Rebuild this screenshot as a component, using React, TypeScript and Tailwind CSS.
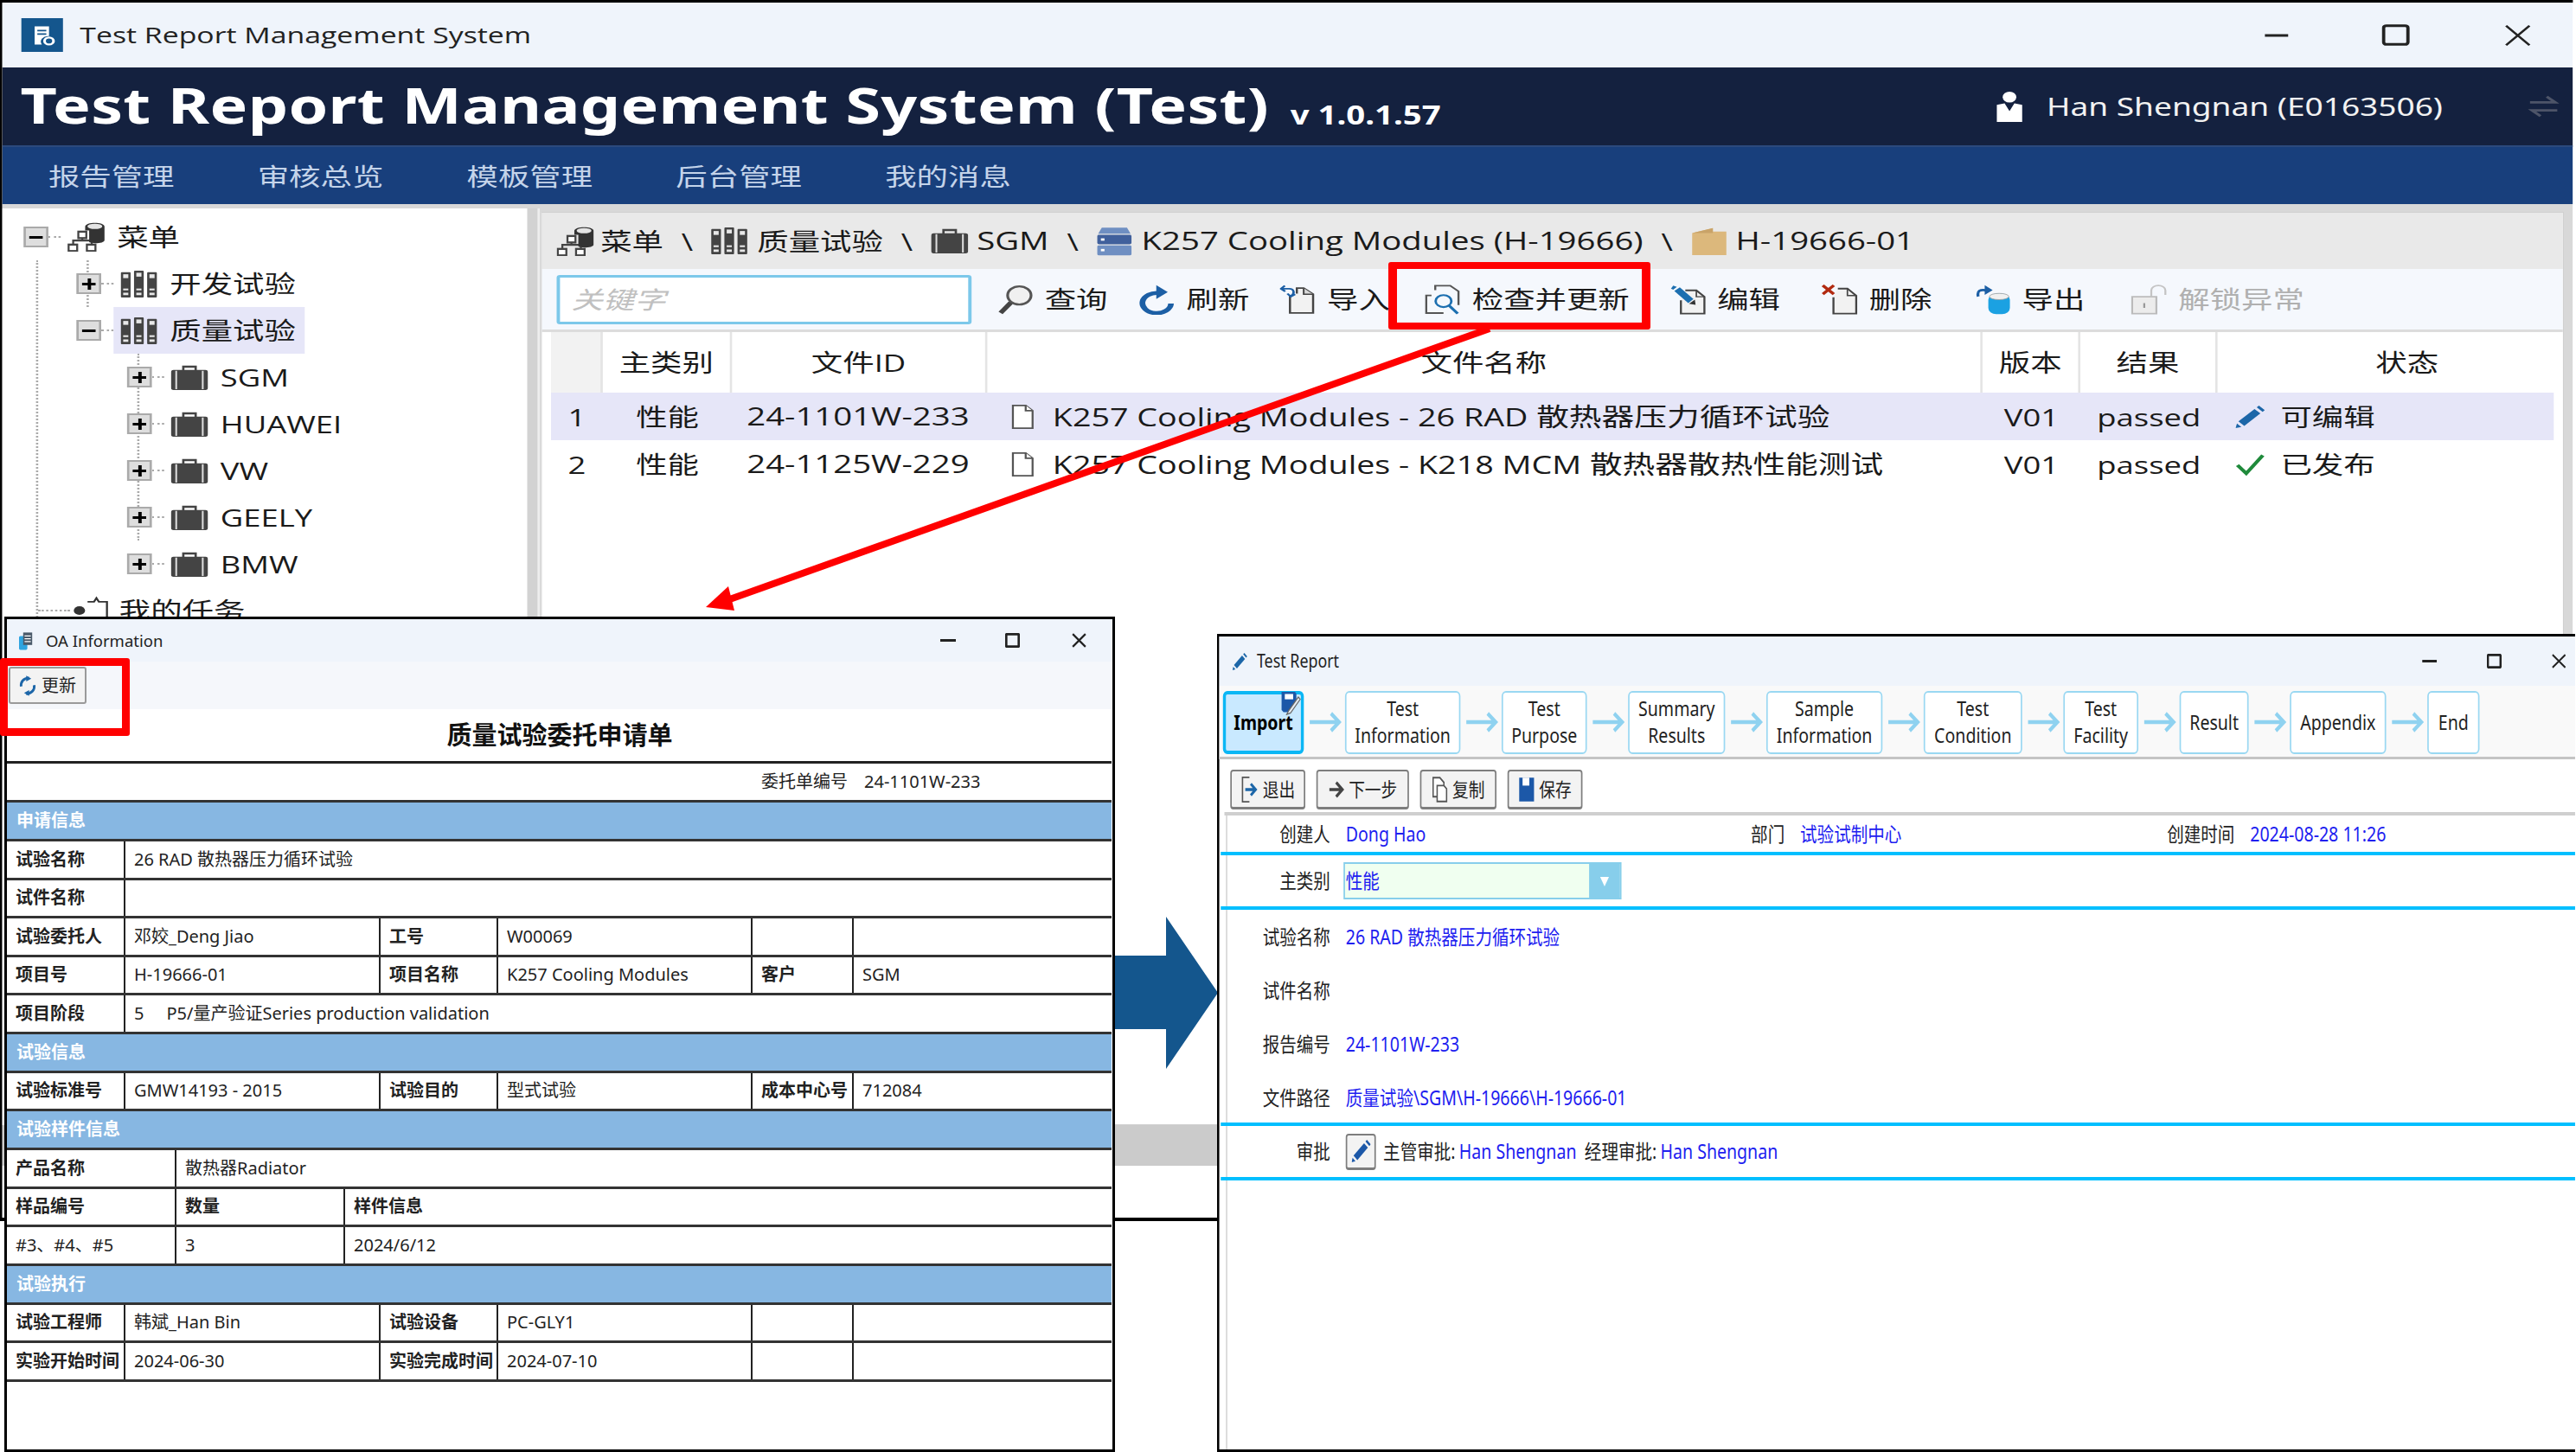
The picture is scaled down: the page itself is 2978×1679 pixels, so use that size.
import React from "react";

const WinCtl = ({ kind, className }: { kind: "min" | "max" | "close"; className: string }) => (
  <svg viewBox="0 0 30 30" preserveAspectRatio="none" className={className} fill="none" stroke="#222">
    {kind === "min" && <path d="M0 15H30" strokeWidth="3" vectorEffect="non-scaling-stroke" />}
    {kind === "max" && <rect x="2" y="2" width="26" height="26" rx="3" strokeWidth="3" vectorEffect="non-scaling-stroke" />}
    {kind === "close" && <path d="M2 2L28 28M28 2L2 28" strokeWidth="2.2" vectorEffect="non-scaling-stroke" />}
  </svg>
);

const NetDb = () => (
  <svg viewBox="0 0 130 100" preserveAspectRatio="none" className="w-[33px] h-[34px] shrink-0">
    <path d="M20 78V62H85V78M52 62V42" fill="none" stroke="#444" strokeWidth="7" />
    <rect x="38" y="32" width="28" height="22" fill="#fff" stroke="#444" strokeWidth="7" />
    <rect x="4" y="76" width="30" height="22" fill="#fff" stroke="#444" strokeWidth="7" />
    <rect x="68" y="76" width="30" height="22" fill="#fff" stroke="#444" strokeWidth="7" />
    <path d="M62 15C62 -2 130 -2 130 15V60C130 72 90 74 76 68V28H62Z" fill="#333" />
    <ellipse cx="96" cy="14" rx="26" ry="9" fill="#e4e4e4" />
  </svg>
);

const Books = () => (
  <svg viewBox="0 0 130 90" preserveAspectRatio="none" className="w-[33px] h-[31px] shrink-0">
    {[2, 48, 94].map((x) => (
      <g key={x}>
        <rect x={x} y={x === 48 ? 0 : 5} width="34" height={x === 48 ? 90 : 85} rx="3" fill="#444" />
        <rect x={x + 8} y={x === 48 ? 7 : 12} width="18" height="13" fill="#e8e8e8" />
        <rect x={x + 8} y="60" width="18" height="6" fill="#e8e8e8" />
        <rect x={x + 8} y="74" width="18" height="8" fill="#e8e8e8" />
      </g>
    ))}
  </svg>
);

const Briefcase = () => (
  <svg viewBox="0 0 42 30" preserveAspectRatio="none" className="w-[33px] h-[29px] shrink-0">
    <path d="M14 7V2H28V7" fill="none" stroke="#444" strokeWidth="2.6" />
    <rect x="0" y="6" width="42" height="24" rx="3" fill="#444" />
    <rect x="5" y="7" width="2" height="22" fill="#ddd" />
    <rect x="35" y="7" width="2" height="22" fill="#ddd" />
  </svg>
);

const ServerIc = () => (
  <svg viewBox="0 0 40 50" preserveAspectRatio="none" className="w-[32px] h-[34px] shrink-0">
    <path d="M6 2H34L38 12H2Z" fill="#6f8fc2" />
    <rect x="1" y="14" width="38" height="16" rx="2" fill="#40609c" />
    <rect x="1" y="32" width="38" height="17" rx="2" fill="#6f8fc2" />
    <rect x="5" y="20" width="4" height="4" fill="#fff" />
    <rect x="5" y="38" width="4" height="4" fill="#fff" />
  </svg>
);

const FolderIc = () => (
  <svg viewBox="0 0 40 40" preserveAspectRatio="none" className="w-[32px] h-[32px] shrink-0">
    <path d="M1 8L24 1V6H39V40H1Z" fill="#dcb87c" />
    <path d="M1 8H24V1Z" fill="#c9a368" />
  </svg>
);

const PersonTask = () => (
  <svg viewBox="0 0 50 44" className="w-[36px] h-[36px] shrink-0">
    <circle cx="12" cy="22" r="7" fill="#333" />
    <path d="M1 44C1 32 23 32 23 44Z" fill="#333" />
    <path d="M22 8H30L33 2L36 8H46V40H26" fill="#fff" stroke="#333" strokeWidth="2.5" />
  </svg>
);

const I = ({ vb, children }: { vb: string; children: React.ReactNode }) => (
  <svg viewBox={vb} preserveAspectRatio="none" className="w-[32px] h-[35px] shrink-0" fill="none">
    {children}
  </svg>
);

const SearchIc = () => (
  <I vb="0 0 92 100">
    <circle cx="56" cy="36" r="30" stroke="#555" strokeWidth="7" fill="#f0f0f0" />
    <path d="M34 60L8 94" stroke="#444" strokeWidth="13" />
  </I>
);

const RefreshIc = () => (
  <I vb="0 0 88 105">
    <path d="M50 30A35 35 0 1 0 78 66" stroke="#1c5fa5" strokeWidth="14" />
    <path d="M42 2L70 26L42 50Z" fill="#1c5fa5" />
  </I>
);

const ImportIc = () => (
  <I vb="0 0 84 100">
    <path d="M24 36V94H78V32L56 12H40V30" stroke="#444" strokeWidth="5" fill="#f2f2f2" />
    <path d="M56 12V32H78" stroke="#444" strokeWidth="4" fill="#d8d8d8" />
    <path d="M12 4L3 14L13 23M4 14H22C34 14 36 30 26 38M18 30L26 40L36 32" stroke="#1c5fa5" strokeWidth="5.5" />
  </I>
);

const CheckDocIc = () => (
  <I vb="0 0 96 106">
    <path d="M18 38H4V100H50" stroke="#555" strokeWidth="5.5" />
    <path d="M28 20V4H68L90 24V72" stroke="#555" strokeWidth="5.5" />
    <circle cx="50" cy="58" r="21" stroke="#1c6fb0" strokeWidth="6.5" fill="#f5f8fd" />
    <path d="M65 74L88 102" stroke="#1c6fb0" strokeWidth="8" />
  </I>
);

const EditIc = () => (
  <I vb="0 0 98 104">
    <path d="M42 20H72L94 42V100H30V54" stroke="#444" strokeWidth="5.5" fill="#f2f2f2" />
    <path d="M72 20V42H94" stroke="#444" strokeWidth="4" />
    <path d="M12 22L27 10L64 50L50 64Z" fill="#1c6fb0" />
    <path d="M3 14L9 4L19 8L9 18Z" fill="#1c6fb0" />
    <path d="M52 66L68 52L70 70Z" fill="#333" />
  </I>
);

const DeleteIc = () => (
  <I vb="0 0 98 104">
    <path d="M44 14H70L94 38V100H32V44" stroke="#444" strokeWidth="5.5" fill="#f2f2f2" />
    <path d="M70 14V38H94" stroke="#444" strokeWidth="4" />
    <path d="M3 3L33 33M33 3L3 33" stroke="#b22a10" strokeWidth="9" />
  </I>
);

const DrumIc = () => (
  <I vb="0 0 100 106">
    <path d="M38 22C14 14 6 24 10 42" stroke="#1c5fa5" strokeWidth="8" />
    <path d="M28 2L50 20L28 36Z" fill="#1c5fa5" />
    <rect x="38" y="32" width="60" height="72" rx="22" fill="#1ba1e2" />
    <ellipse cx="68" cy="42" rx="27" ry="11" fill="#f0f0f0" stroke="#999" strokeWidth="2" />
  </I>
);

const LockIc = () => (
  <I vb="0 0 92 104">
    <rect x="3" y="42" width="62" height="58" stroke="#bbb" strokeWidth="5" fill="#ececec" />
    <path d="M52 42V20C52 -2 88 -2 88 20V36" stroke="#c4c4c4" strokeWidth="5" />
    <path d="M34 64V80" stroke="#999" strokeWidth="5" />
  </I>
);

const PenIc = ({ c = "#1c66a8", className = "w-[30px] h-[30px]" }: { c?: string; className?: string }) => (
  <svg viewBox="0 0 40 40" className={className + " shrink-0"}>
    <path d="M4 28L26 6L34 14L12 36Z" fill={c} />
    <path d="M29 3L32 0L40 8L37 11Z" fill={c} />
    <path d="M2 32L8 38L0 40Z" fill={c} />
  </svg>
);

const Expand = ({ open }: { open?: boolean }) => (
  <div className="flex items-center -ml-[11px] shrink-0">
    <div className="w-[22px] h-[24px] bg-[#dedede] border-2 border-[#aaaaaa] flex items-center justify-center">
      <div className="relative w-[12px] h-[3px] bg-black">
        {!open && <div className="absolute left-[4.5px] -top-[5px] w-[3px] h-[13px] bg-black" />}
      </div>
    </div>
    <div className="w-[11px] border-t-2 border-dotted border-[#aaa]" />
  </div>
);

const TreeRow = ({ icon, label, open, selected }: { icon: React.ReactNode; label: string; open?: boolean; selected?: boolean }) => (
  <div className="flex items-center h-[54px]">
    <Expand open={open} />
    <div className={"flex items-center h-[54px] pl-[6px] pr-[8px] gap-[11px] text-[28px] text-[#1a1a1a] " + (selected ? "bg-[#e6e6f8]" : "")}>
      {icon}
      <span>{label}</span>
    </div>
  </div>
);

const Tool = ({ icon, label, ml, dim }: { icon: React.ReactNode; label: string; ml: string; dim?: boolean }) => (
  <div className={"flex items-center gap-[10px] text-[28px] " + ml + (dim ? " text-[#b0b0b0]" : " text-[#1a1a1a]")}>
    {icon}
    <span>{label}</span>
  </div>
);

const Sep = () => <span className="mx-[16px]">\</span>;

const Row = ({ n, file, sel, icon, status }: { n: string; file: string; sel?: boolean; icon: React.ReactNode; status: string }) => (
  <div className={"flex items-center h-[55px] text-[28px] text-[#1a1a1a] " + (sel ? "bg-[#e6e6f8]" : "")}>
    <div className="w-[46px] pl-[15px]">{n}</div>
    <div className="w-[115px] text-center">性能</div>
    <div className="w-[227px] pl-[13px] text-[29.5px]">{n === "1" ? "24-1101W-233" : "24-1125W-229"}</div>
    <div className="w-[885px] flex items-center pl-[21px] gap-[16px] text-[29px]">
      <svg viewBox="0 0 24 34" className="w-[21px] h-[30px]" fill="#fff" stroke="#555" strokeWidth="2" preserveAspectRatio="none">
        <path d="M2 2H15L22 9V32H2Z" />
        <path d="M15 2V9H22" />
      </svg>
      <span>{file}</span>
    </div>
    <div className="w-[87px] text-center">V01</div>
    <div className="w-[122px] text-center">passed</div>
    <div className="flex items-center pl-[16px] gap-[14px]">
      {icon}
      <span>{status}</span>
    </div>
  </div>
);

const H = ({ w, children, bg }: { w: string; children?: React.ReactNode; bg?: string }) => (
  <div className={w + " h-full flex items-center justify-center border-r-2 border-[#e4e4e4] " + (bg || "")}>{children}</div>
);

const Main = () => (
  <div className="w-[2288px] h-[1412px] origin-top-left scale-x-[1.3] border-t-[3px] border-b-[4px] border-l-[2px] border-black flex flex-col overflow-hidden bg-white font-['Open_Sans','Noto_Sans_CJK_SC',sans-serif]">
    <div className="h-[75px] bg-[#eff4fb] flex items-center shrink-0 pl-[17px] text-[26px] text-[#222]">
      <div className="w-[37px] h-[39px] bg-[#14568d] flex items-center justify-center mr-[15px]">
        <svg viewBox="0 0 30 30" className="w-[24px] h-[28px]">
          <path d="M6 2H22V16A8 8 0 0 0 14 28H6Z" fill="#fff" />
          <path d="M9 8H19M9 13H19" stroke="#14568d" strokeWidth="2" />
          <circle cx="22" cy="23" r="5" fill="none" stroke="#fff" strokeWidth="3" />
        </svg>
      </div>
      <span>Test Report Management System</span>
      <div className="ml-auto flex items-center pr-[37px]">
        <WinCtl kind="min" className="w-[21px] h-[4px] mr-[83px]" />
        <WinCtl kind="max" className="w-[25px] h-[25px] mr-[84px]" />
        <WinCtl kind="close" className="w-[24px] h-[26px]" />
      </div>
    </div>
    <div className="h-[90px] bg-[#14213f] flex items-center shrink-0 pl-[16px] text-white relative font-['Noto_Sans',sans-serif]">
      <span className="text-[56.5px] font-bold leading-none tracking-[0.25px] -mt-[1px]">Test Report Management System (Test)</span>
      <span className="text-[29.5px] font-bold ml-[19px] mt-[20px]">v 1.0.1.57</span>
      <div className="ml-auto flex items-center">
        <svg viewBox="0 0 30 40" className="w-[26px] h-[36px] mr-[20px]" preserveAspectRatio="none">
          <circle cx="15" cy="8" r="7" fill="#fff" />
          <path d="M2 40V18L10 16L15 26L20 16L28 18V40Z" fill="#fff" />
        </svg>
        <span className="text-[28.5px] text-[#f2f2f2] w-[428px]">Han Shengnan (E0163506)</span>
        <svg viewBox="0 0 30 30" className="w-[28px] h-[32px] mr-[12px]" fill="none" stroke="#4d5468" strokeWidth="3">
          <path d="M2 10H26L18 3M28 20H4L12 27" />
        </svg>
      </div>
    </div>
    <div className="h-[68px] bg-[#183f7c] flex items-center gap-[74px] shrink-0 pl-[41px] pt-[2px] text-[28px] text-[#c4d4ea] border-t-2 border-[#2b4a7d]">
      <span>报告管理</span>
      <span>审核总览</span>
      <span>模板管理</span>
      <span>后台管理</span>
      <span>我的消息</span>
    </div>
    <div className="flex-1 flex bg-[#d8d8d8] min-h-0 pt-[5px]">
      <div className="w-[467px] bg-white overflow-hidden pt-[6px] pl-[30px] shrink-0">
        <TreeRow icon={<NetDb />} label="菜单" open />
        <div className="border-l-2 border-dotted border-[#aaa]">
          <div className="ml-[43px]">
            <div className="border-l-2 border-dotted border-[#aaa]"><TreeRow icon={<Books />} label="开发试验" /></div>
            <div className="border-l-2 border-transparent"><TreeRow icon={<Books />} label="质量试验" open selected /></div>
            <div className="ml-[45px]">
              <div className="border-l-2 border-dotted border-[#aaa]">
                <TreeRow icon={<Briefcase />} label="SGM" />
                <TreeRow icon={<Briefcase />} label="HUAWEI" />
                <TreeRow icon={<Briefcase />} label="VW" />
                <TreeRow icon={<Briefcase />} label="GEELY" />
              </div>
              <div className="border-l-2 border-transparent"><TreeRow icon={<Briefcase />} label="BMW" /></div>
            </div>
          </div>
          <div className="flex items-center h-[54px] text-[28px] text-[#1a1a1a]">
            <div className="w-[28px] border-t-2 border-dotted border-[#aaa]" />
            <PersonTask />
            <span className="ml-[8px]">我的任务</span>
          </div>
        </div>
      </div>
      <div className="w-[11px] bg-[#d2d2d2] border-r-2 border-[#eeeeee] shrink-0" />
      <div className="flex-1 ml-[1px] mr-[8px] mt-[4px] flex flex-col bg-white border border-[#d0d0d0] min-h-0">
        <div className="h-[65px] bg-[#e9e9e9] flex items-center pl-[13px] text-[28px] text-[#1a1a1a] shrink-0">
          <NetDb />
          <span className="ml-[6px]">菜单</span>
          <Sep />
          <Books />
          <span className="ml-[8px]">质量试验</span>
          <Sep />
          <Briefcase />
          <span className="ml-[8px] text-[29.5px]">SGM</span>
          <Sep />
          <ServerIc />
          <span className="ml-[8px] text-[29.5px]">K257 Cooling Modules (H-19666)</span>
          <Sep />
          <FolderIc />
          <span className="ml-[8px] text-[29.5px]">H-19666-01</span>
        </div>
        <div className="h-[73px] bg-[#f5f8fd] flex items-center pl-[13px] shrink-0 border-b-[3px] border-[#dcdcdc]">
          <div className="w-[369px] h-[57px] bg-white border-[3px] border-[#7cc8ea] rounded-[3px] flex items-center pl-[10px] text-[28px] italic text-[#c0c0c0] mr-[23px]">关键字</div>
          <Tool icon={<SearchIc />} label="查询" ml="" />
          <Tool icon={<RefreshIc />} label="刷新" ml="ml-[28px]" />
          <Tool icon={<ImportIc />} label="导入" ml="ml-[27px]" />
          <Tool icon={<CheckDocIc />} label="检查并更新" ml="ml-[31px]" />
          <Tool icon={<EditIc />} label="编辑" ml="ml-[36px]" />
          <Tool icon={<DeleteIc />} label="删除" ml="ml-[37px]" />
          <Tool icon={<DrumIc />} label="导出" ml="ml-[38px]" />
          <Tool icon={<LockIc />} label="解锁异常" ml="ml-[41px]" dim />
        </div>
        <div className="flex-1 pl-[8px] pr-[8px] bg-white min-h-0">
          <div className="h-[70px] flex items-center text-[28px] text-[#1a1a1a]">
            <H w="w-[46px]" bg="bg-[#f2f2f2]" />
            <H w="w-[115px]">主类别</H>
            <H w="w-[227px]">文件ID</H>
            <H w="w-[885px]">文件名称</H>
            <H w="w-[87px]">版本</H>
            <H w="w-[122px]">结果</H>
            <div className="flex-1 flex justify-center pl-[38px]">状态</div>
          </div>
          <Row n="1" sel file="K257 Cooling Modules - 26 RAD 散热器压力循环试验" status="可编辑" icon={<PenIc className="w-[26px] h-[34px]" />} />
          <Row n="2" file="K257 Cooling Modules - K218 MCM 散热器散热性能测试" status="已发布" icon={
            <svg viewBox="0 0 30 30" className="w-[26px] h-[30px]" fill="none" stroke="#1f8a3b" strokeWidth="4"><path d="M2 16L11 27L28 3" /></svg>
          } />
        </div>
      </div>
    </div>
    <div className="h-[47px] bg-[#cbcbcb] shrink-0" />
    <div className="h-[60px] bg-white shrink-0" />
  </div>
);

const LC = ({ w, b, children, last }: { w: string; b?: boolean; children?: React.ReactNode; last?: boolean }) => (
  <div className={w + " h-full flex items-center pl-[10px] whitespace-pre " + (b ? "font-bold " : "") + (last ? "" : "border-r-2 border-[#222]")}>{children}</div>
);

const Band = ({ t }: { t: string }) => (
  <div className="h-[45px] bg-[#87b7e2] flex items-center pl-[11px] font-bold text-white border-b-[3px] border-[#333]">{t}</div>
);

const G6 = ({ c }: { c: string[] }) => (
  <div className="h-[44.5px] flex border-b-[3px] border-[#333]">
    <LC w="w-[137px]" b>{c[0]}</LC>
    <LC w="w-[295px]">{c[1]}</LC>
    <LC w="w-[136px]" b>{c[2]}</LC>
    <LC w="w-[294px]">{c[3]}</LC>
    <LC w="w-[117px]" b>{c[4]}</LC>
    <LC w="flex-1" last>{c[5]}</LC>
  </div>
);

const G2 = ({ a, b }: { a: string; b: string }) => (
  <div className="h-[44.5px] flex border-b-[3px] border-[#333]">
    <LC w="w-[137px]" b>{a}</LC>
    <LC w="flex-1" last>{b}</LC>
  </div>
);

const G3 = ({ c, bold }: { c: string[]; bold?: boolean }) => (
  <div className="h-[44.5px] flex border-b-[3px] border-[#333]">
    <LC w="w-[196px]" b={bold}>{c[0]}</LC>
    <LC w="w-[195px]" b={bold}>{c[1]}</LC>
    <LC w="flex-1" b={bold} last>{c[2]}</LC>
  </div>
);

const OAWindow = () => (
  <div className="absolute left-[5px] top-[713px] w-[1284px] h-[966px] bg-white border-[3px] border-black flex flex-col text-[20px] text-[#222]">
    <div className="h-[49px] bg-[#eff4fb] flex items-center shrink-0 pl-[14px] text-[18.5px]">
      <svg viewBox="0 0 20 26" className="w-[16px] h-[24px] mr-[15px]">
        <rect x="0" y="6" width="12" height="20" rx="2" fill="#2fa4e0" />
        <rect x="6" y="1" width="13" height="18" fill="#4a5a6a" />
        <path d="M8 6H17M8 10H17M8 14H17" stroke="#fff" strokeWidth="1.5" />
      </svg>
      <span>OA Information</span>
      <div className="ml-auto flex items-center pr-[30px]">
        <WinCtl kind="min" className="w-[18px] h-[3px] mr-[57px]" />
        <WinCtl kind="max" className="w-[17px] h-[17px] mr-[60px]" />
        <WinCtl kind="close" className="w-[17px] h-[17px]" />
      </div>
    </div>
    <div className="h-[55px] bg-[#f5f7fb] flex items-center pl-[2px] shrink-0">
      <div className="w-[90px] h-[43px] bg-[#f3f3f3] border-2 border-[#9a9a9a] rounded-[3px] flex items-center justify-center gap-[6px]">
        <svg viewBox="0 0 24 30" className="w-[20px] h-[26px]" fill="none" stroke="#1c66a8" strokeWidth="3.5">
          <path d="M14 4C6 4 2 10 3 16M10 26C18 26 22 20 21 14" />
          <path d="M10 1L17 5L10 9Z" fill="#1c66a8" stroke="none" />
          <path d="M14 21L7 25L14 29Z" fill="#1c66a8" stroke="none" />
        </svg>
        <span>更新</span>
      </div>
    </div>
    <div className="h-[60px] flex items-center justify-center text-[29px] font-bold shrink-0 text-[#111]">质量试验委托申请单</div>
    <div className="mr-[1px] ml-0 border-t-[3px] border-[#222]">
      <div className="h-[45px] flex items-center pl-[872px] border-b-[3px] border-[#333]">
        <span>委托单编号</span>
        <span className="ml-[19px]">24-1101W-233</span>
      </div>
      <Band t="申请信息" />
      <G2 a="试验名称" b="26 RAD 散热器压力循环试验" />
      <G2 a="试件名称" b="" />
      <G6 c={["试验委托人", "邓姣_Deng Jiao", "工号", "W00069", "", ""]} />
      <G6 c={["项目号", "H-19666-01", "项目名称", "K257 Cooling Modules", "客户", "SGM"]} />
      <G2 a="项目阶段" b="5     P5/量产验证Series production validation" />
      <Band t="试验信息" />
      <G6 c={["试验标准号", "GMW14193 - 2015", "试验目的", "型式试验", "成本中心号", "712084"]} />
      <Band t="试验样件信息" />
      <div className="h-[44.5px] flex border-b-[3px] border-[#333]">
        <LC w="w-[196px]" b>产品名称</LC>
        <LC w="flex-1" last>散热器Radiator</LC>
      </div>
      <G3 bold c={["样品编号", "数量", "样件信息"]} />
      <G3 c={["#3、#4、#5", "3", "2024/6/12"]} />
      <Band t="试验执行" />
      <G6 c={["试验工程师", "韩斌_Han Bin", "试验设备", "PC-GLY1", "", ""]} />
      <G6 c={["实验开始时间", "2024-06-30", "实验完成时间", "2024-07-10", "", ""]} />
    </div>
  </div>
);

const Step = ({ w, children, active }: { w: string; children: React.ReactNode; active?: boolean }) => (
  <div className={w + " relative h-[73px] rounded-[6px] flex items-center justify-center text-center leading-[31px] text-[23px] whitespace-pre-line " + (active ? "bg-[#c9e9ff] border-[4px] border-[#0cb7f5] font-bold text-black" : "bg-white border-2 border-[#9ad8f2] text-[#222]")}>
    {children}
    {active && (
      <svg viewBox="0 0 30 32" className="absolute right-0 -top-[4px] w-[28px] h-[28px]">
        <path d="M1 1H22L24 4V18L14 28H4L1 25Z" fill="#1c58a8" />
        <rect x="6" y="4" width="13" height="7" fill="#fff" />
        <path d="M27 8L12 26L9 31L15 29L30 11Z" fill="#e4ecf2" stroke="#666" strokeWidth="1.5" />
      </svg>
    )}
  </div>
);

const StepArrow = () => (
  <svg viewBox="0 0 56 24" className="w-[56px] h-[24px] shrink-0" fill="none">
    <path d="M8 12H46M37 2L48 12L37 22" stroke="#8fd2f0" strokeWidth="4.5" />
  </svg>
);

const Btn = ({ w, icon, children }: { w: string; icon: React.ReactNode; children: React.ReactNode }) => (
  <div className={w + " h-[46px] bg-[#f3f3f3] border-2 border-b-[3px] border-[#7d7d7d] rounded-[4px] flex items-center justify-center gap-[6px] text-[22px] text-[#222]"}>
    {icon}
    <span>{children}</span>
  </div>
);

const FRow = ({ label, h, children }: { label: string; h: string; children?: React.ReactNode }) => (
  <div className={h + " flex items-center"}>
    <div className="w-[149px] text-right mr-[21px] text-[#222] shrink-0">{label}</div>
    <div className="text-[#2020f0]">{children}</div>
  </div>
);

const ReportWindow = () => (
  <div className="absolute left-[1407px] top-[733px] w-[1847px] h-[946px] origin-top-left scale-x-[0.85] bg-white border-t-[3px] border-l-[3px] border-b-[3px] border-black flex flex-col text-[23px]">
    <div className="h-[57px] bg-[#eff4fb] flex items-center shrink-0 pl-[18px] text-[21px] text-[#222]">
      <PenIc c="#1c66a8" className="w-[20px] h-[22px] mr-[13px]" />
      <span>Test Report</span>
      <div className="ml-auto flex items-center pr-[12px]">
        <WinCtl kind="min" className="w-[20px] h-[3px] mr-[68px]" />
        <WinCtl kind="max" className="w-[20px] h-[17px] mr-[68px]" />
        <WinCtl kind="close" className="w-[20px] h-[17px]" />
      </div>
    </div>
    <div className="h-[85px] bg-[#f9f9f9] flex items-center shrink-0 pl-[5px] pt-[2px] border-b-[3px] border-[#c4c4c4]">
      <Step w="w-[110px]" active>Import</Step>
      <StepArrow />
      <Step w="w-[157px]">{"Test\nInformation"}</Step>
      <StepArrow />
      <Step w="w-[116px]">{"Test\nPurpose"}</Step>
      <StepArrow />
      <Step w="w-[132px]">{"Summary\nResults"}</Step>
      <StepArrow />
      <Step w="w-[158px]">{"Sample\nInformation"}</Step>
      <StepArrow />
      <Step w="w-[134px]">{"Test\nCondition"}</Step>
      <StepArrow />
      <Step w="w-[102px]">{"Test\nFacility"}</Step>
      <StepArrow />
      <Step w="w-[94px]">Result</Step>
      <StepArrow />
      <Step w="w-[131px]">Appendix</Step>
      <StepArrow />
      <Step w="w-[71px]">End</Step>
    </div>
    <div className="h-[65px] flex items-center gap-[15px] pl-[8px] pt-[9px] shrink-0 border-b-[4px] border-[#cfcfcf] ml-[7px]">
      <Btn w="w-[102px]" icon={<svg viewBox="0 0 24 34" className="w-[24px] h-[32px]" fill="none"><path d="M12 2H2V32H12" stroke="#555" strokeWidth="2" /><path d="M6 17H20M14 10L21 17L14 24" stroke="#1c66a8" strokeWidth="3.5" /></svg>}>退出</Btn>
      <Btn w="w-[126px]" icon={<svg viewBox="0 0 22 26" className="w-[22px] h-[24px]" fill="none"><path d="M1 13H19M11 4L20 13L11 22" stroke="#444" strokeWidth="4" /></svg>}>下一步</Btn>
      <Btn w="w-[104px]" icon={<svg viewBox="0 0 24 34" className="w-[22px] h-[32px]" fill="#fff" stroke="#555" strokeWidth="2"><path d="M2 2H12L18 8V26H2Z" /><path d="M8 12H18L22 16V32H8Z" /></svg>}>复制</Btn>
      <Btn w="w-[102px]" icon={<svg viewBox="0 0 24 32" className="w-[22px] h-[30px]"><path d="M1 1H23V31H1Z" fill="#1c58a8" /><rect x="6" y="1" width="10" height="10" fill="#fff" /></svg>}>保存</Btn>
    </div>
    <div className="ml-[9px] flex-1 border-l-2 border-[#d8d8d8] min-h-0">
      <div className="h-[46px] flex items-center border-b-[4px] border-[#00bfff] -ml-[9px] text-[#222]">
        <div className="w-[149px] text-right shrink-0">创建人</div>
        <div className="ml-[21px] w-[551px] text-[#2020f0]">Dong Hao</div>
        <div>部门</div>
        <div className="ml-[21px] w-[499px] text-[#2020f0]">试验试制中心</div>
        <div>创建时间</div>
        <div className="ml-[21px] text-[#2020f0]">2024-08-28 11:26</div>
      </div>
      <div className="h-[63px] flex items-center border-b-[4px] border-[#00bfff] -ml-[9px]">
        <div className="w-[149px] text-right mr-[18px] text-[#222] shrink-0">主类别</div>
        <div className="w-[378px] h-[43px] bg-[#f0fff0] border-2 border-[#87ceeb] flex items-center pl-[1px] text-[#2020f0] relative">
          性能
          <div className="absolute right-0 top-0 bottom-0 w-[42px] bg-[#87ceeb] flex items-center justify-center">
            <svg viewBox="0 0 14 14" className="w-[14px] h-[14px]"><path d="M1 2H13L7 13Z" fill="#fff" /></svg>
          </div>
        </div>
      </div>
      <div className="-ml-[9px] border-b-[4px] border-[#00bfff] h-[250px]">
        <FRow h="h-[62px]" label="试验名称">26 RAD 散热器压力循环试验</FRow>
        <FRow h="h-[62px]" label="试件名称" />
        <FRow h="h-[62px]" label="报告编号">24-1101W-233</FRow>
        <FRow h="h-[62px]" label="文件路径">质量试验\SGM\H-19666\H-19666-01</FRow>
      </div>
      <div className="-ml-[9px] h-[63px] flex items-center border-b-[4px] border-[#00bfff] text-[#222]">
        <div className="w-[149px] text-right mr-[21px] shrink-0">审批</div>
        <div className="w-[41px] h-[42px] bg-[#f3f3f3] border-2 border-b-[3px] border-[#7d7d7d] rounded-[4px] flex items-center justify-center mr-[10px]">
          <PenIc c="#1c58a8" className="w-[26px] h-[30px]" />
        </div>
        <span>主管审批:</span>
        <span className="ml-[5px] text-[#2020f0]">Han Shengnan</span>
        <span className="ml-[11px]">经理审批:</span>
        <span className="ml-[5px] text-[#2020f0]">Han Shengnan</span>
      </div>
    </div>
  </div>
);

export default function App() {
  return (
    <div className="relative w-[2978px] h-[1679px] overflow-hidden bg-white font-['Noto_Sans','Noto_Sans_CJK_SC',sans-serif]">
      <Main />
      <svg viewBox="0 0 2978 1679" className="absolute inset-0 w-[2978px] h-[1679px] pointer-events-none">
        <path d="M1722 380L838 695" stroke="#ff0000" strokeWidth="8" />
        <path d="M816 702L842 678L849 706Z" fill="#ff0000" />
        <path d="M1288 1105H1348V1060L1408 1148L1348 1236V1190H1288Z" fill="#14568d" />
      </svg>
      <div className="absolute left-[1605px] top-[303px] w-[303px] h-[78px] border-x-[10px] border-y-[8px] border-[#ff0000] rounded-[3px]" />
      <OAWindow />
      <ReportWindow />
      <div className="absolute left-0 top-[761px] w-[150px] h-[90px] border-[9px] border-[#ff0000] rounded-[3px]" />
    </div>
  );
}
